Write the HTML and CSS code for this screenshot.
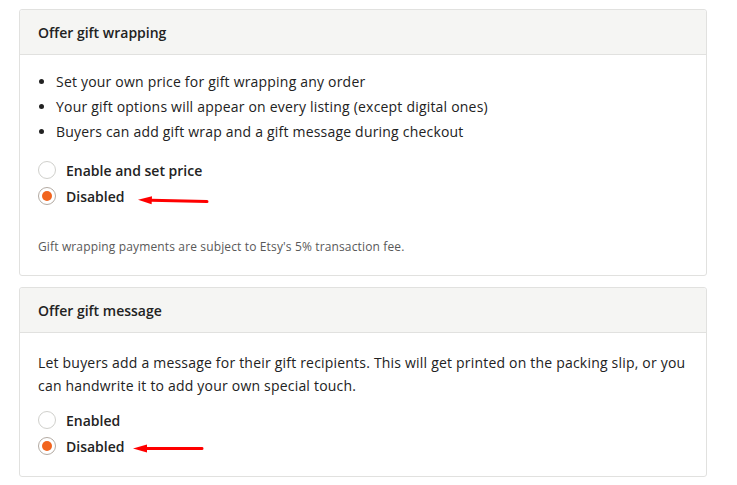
FILE: index.html
```html
<!DOCTYPE html>
<html>
<head>
<meta charset="utf-8">
<link rel="stylesheet" href="styles.css">
</head>
<body>
<div class="page">
  <section class="card">
    <header class="card-head">Offer gift wrapping</header>
    <div class="card-body body-wrap">
      <ul class="bullets">
        <li>Set your own price for gift wrapping any order</li>
        <li>Your gift options will appear on every listing (except digital ones)</li>
        <li>Buyers can add gift wrap and a gift message during checkout</li>
      </ul>
      <div class="radios">
        <label class="radio"><span class="dot"></span><span class="lbl">Enable and set price</span></label>
        <label class="radio checked"><span class="dot"></span><span class="lbl">Disabled</span>
          <svg class="arrow arrow1" width="72" height="10" viewBox="0 0 72 10"><path d="M14 4.2 L70 5.6" stroke="#f00" stroke-width="3" stroke-linecap="round" fill="none"/><path d="M1 3.8 L15 0.2 L14.6 8.2 Z" fill="#f00"/></svg>
        </label>
      </div>
      <p class="note">Gift wrapping payments are subject to Etsy's 5% transaction fee.</p>
    </div>
  </section>
  <section class="card">
    <header class="card-head">Offer gift message</header>
    <div class="card-body body-msg">
      <p class="para">Let buyers add a message for their gift recipients. This will get printed on the packing slip, or you can handwrite it to add your own special touch.</p>
      <div class="radios radios-msg">
        <label class="radio"><span class="dot"></span><span class="lbl">Enabled</span></label>
        <label class="radio checked"><span class="dot"></span><span class="lbl">Disabled</span>
          <svg class="arrow arrow2" width="72" height="10" viewBox="0 0 72 10"><path d="M14 4.6 L70 4.4" stroke="#f00" stroke-width="3" stroke-linecap="round" fill="none"/><path d="M1 4.6 L15 0.6 L15 8.6 Z" fill="#f00"/></svg>
        </label>
      </div>
    </div>
  </section>
</div>
</body>
</html>
```
FILE: styles.css
```css
* { box-sizing: border-box; }
html, body { margin: 0; padding: 0; background: #fff; }
body {
  font-family: "Open Sans", "Liberation Sans", sans-serif;
  color: #222;
  font-size: 14px;
}
.page {
  padding: 9px 0 0 19px;
  width: 707px;
  display: flex;
  flex-direction: column;
  gap: 11px;
}
.card {
  border: 1px solid #e1e1df;
  border-radius: 3px;
  background: #fff;
}
.card-head {
  height: 45px;
  background: #f5f5f3;
  border-bottom: 1px solid #e1e1df;
  padding: 0 18px;
  display: flex;
  align-items: center;
  font-weight: 600;
  font-size: 14px;
  border-radius: 3px 3px 0 0;
}
.card-body { padding: 0 18px; }
.body-wrap { padding-top: 14px; padding-bottom: 19px; }
.body-msg { padding-top: 18px; padding-bottom: 17px; }
.bullets {
  margin: 0;
  padding: 0 0 0 18px;
  line-height: 25px;
  letter-spacing: 0.2px;
}
.bullets li { padding-left: 0; }
.radios { margin-top: 13px; display: flex; flex-direction: column; }
.radios-msg { margin-top: 10px; }
.radio {
  position: relative;
  height: 26px;
  display: flex;
  align-items: center;
  gap: 10px;
  font-weight: 600;
}
.dot {
  width: 18px;
  height: 18px;
  border-radius: 50%;
  border: 1px solid #d0d0cc;
  background: #fff;
  display: flex;
  align-items: center;
  justify-content: center;
  flex: none;
}
.checked .dot { border-color: #b3aaa2; }
.checked .dot::after {
  content: "";
  width: 10px;
  height: 10px;
  border-radius: 50%;
  background: #f1641e;
}
.arrow { position: absolute; }
.arrow1 { left: 99px; top: 13px; }
.arrow2 { left: 94px; top: 11px; }
.note {
  margin: 29px 0 0;
  font-size: 12px;
  line-height: 18px;
  color: #595959;
  letter-spacing: 0.14px;
}
.para {
  margin: 0;
  line-height: 23px;
  letter-spacing: 0.2px;
}
```
